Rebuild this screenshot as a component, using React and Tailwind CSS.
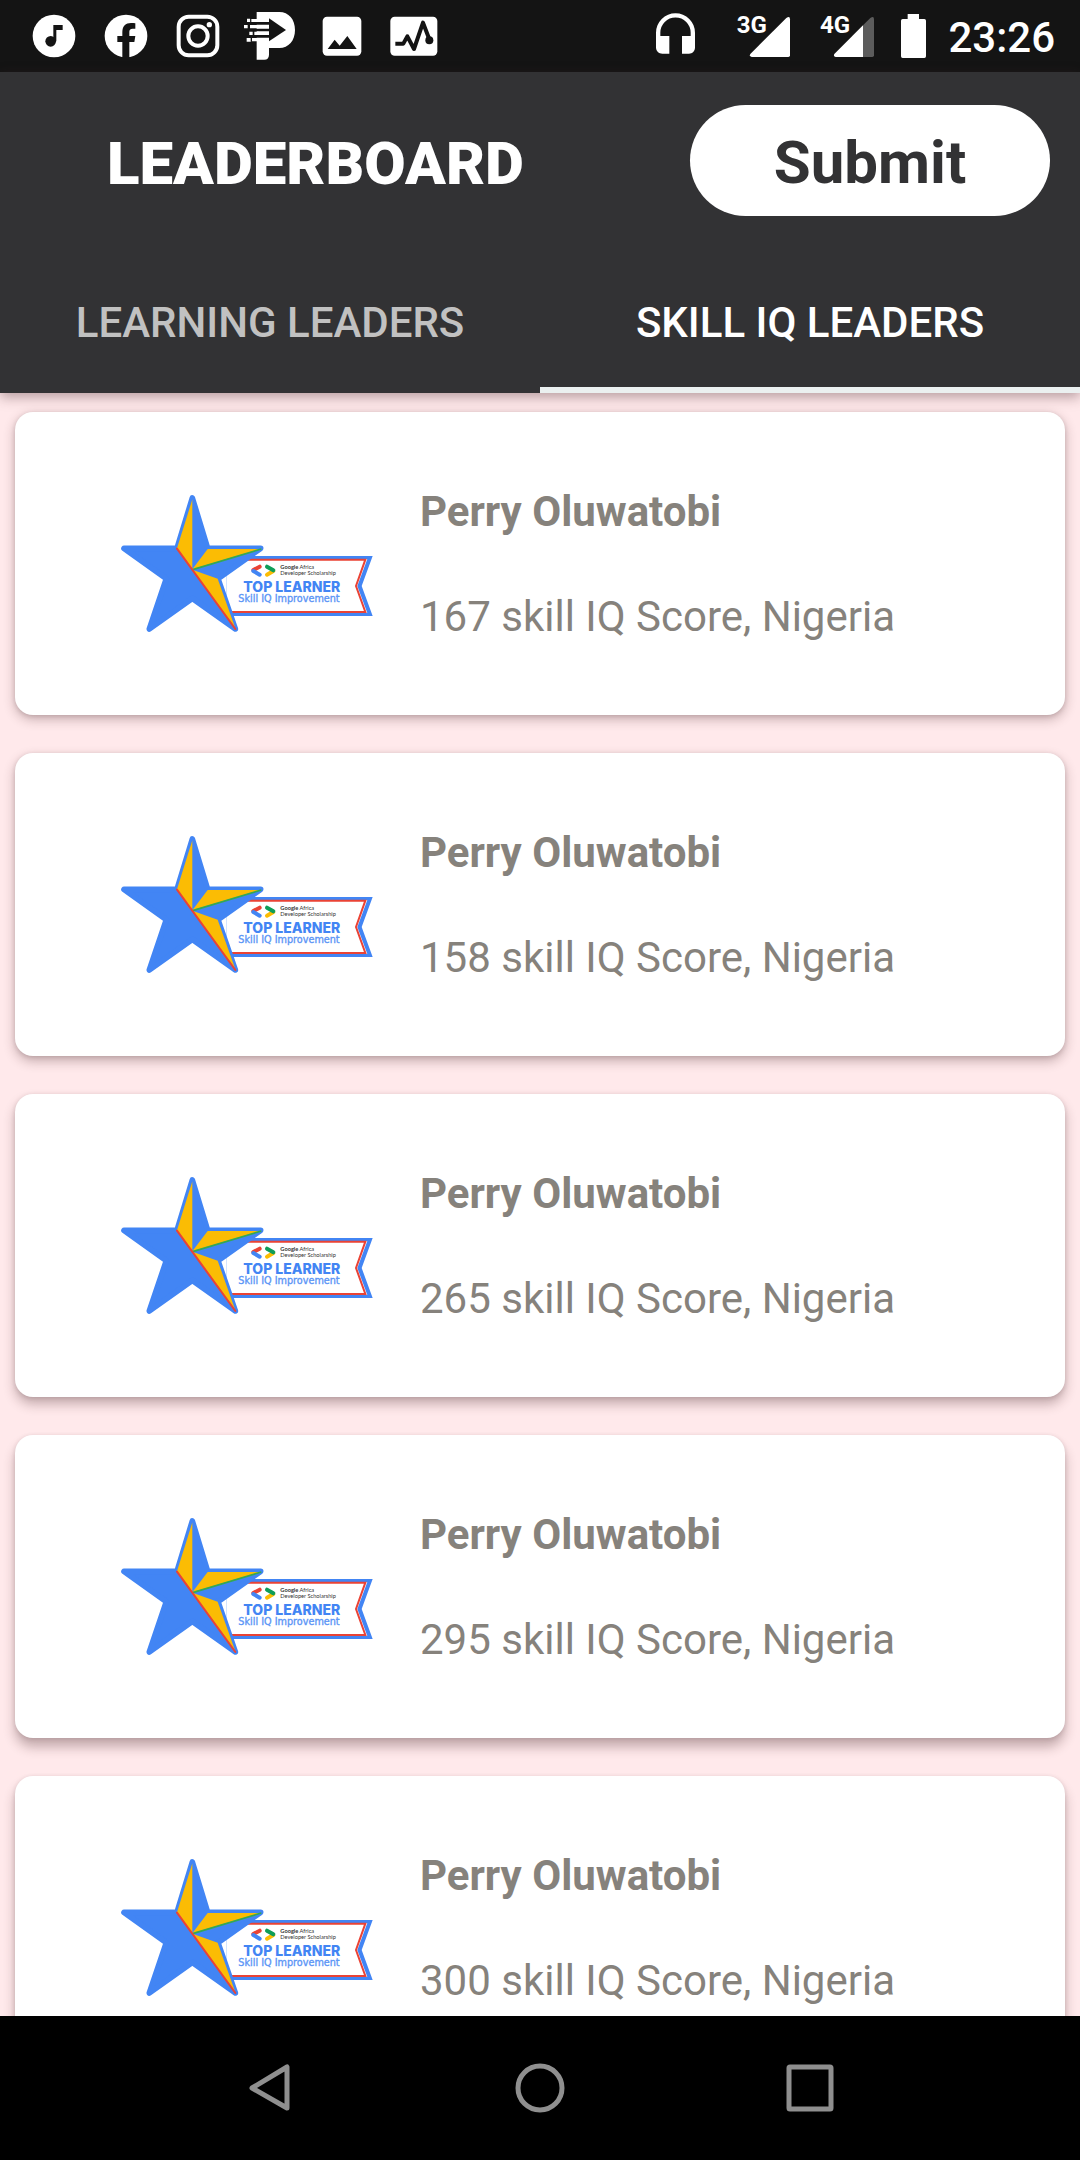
const leaders = [
  { name: "Perry Oluwatobi", score: 167, country: "Nigeria", shadow: "shadow-[0_4px_12px_rgba(70,40,45,0.32),0_1px_4px_rgba(70,40,45,0.15)]" },
  { name: "Perry Oluwatobi", score: 158, country: "Nigeria", shadow: "shadow-[0_5px_12px_rgba(70,40,45,0.32),0_1px_4px_rgba(70,40,45,0.15)]" },
  { name: "Perry Oluwatobi", score: 265, country: "Nigeria", shadow: "shadow-[0_7px_12px_rgba(70,40,45,0.32),0_1px_4px_rgba(70,40,45,0.15)]" },
  { name: "Perry Oluwatobi", score: 295, country: "Nigeria", shadow: "shadow-[0_9px_12px_rgba(70,40,45,0.32),0_1px_4px_rgba(70,40,45,0.15)]" },
  { name: "Perry Oluwatobi", score: 300, country: "Nigeria", shadow: "shadow-[0_9px_12px_rgba(70,40,45,0.32),0_1px_4px_rgba(70,40,45,0.15)]" },
];

function StatusIcon({ viewBox, label, className = "w-[72px]", children }) {
  return (
    <svg viewBox={viewBox} role="img" aria-label={label} className={`h-[72px] shrink-0 ${className}`}>
      {children}
    </svg>
  );
}

function StatusBar() {
  return (
    <div className="flex h-[72px] shrink-0 items-center justify-between bg-[#141414] pl-[18px] pr-[25px] text-white">
      <div className="flex">
        <StatusIcon viewBox="54 0 216 216" label="Music">
          <circle cx="162" cy="108" r="64" fill="#fff" />
          <circle cx="152" cy="124" r="16" fill="#141414" />
          <path d="M160 75h28v15h-19v34h-9z" fill="#141414" />
        </StatusIcon>
        <StatusIcon viewBox="270 0 216 216" label="Facebook">
          <circle cx="378" cy="108" r="64" fill="#fff" />
          <path d="M367 174v-48h-15v-18h15v-12c0-18 10-27 26-27 5 0 9 0 13 1v16h-8c-8 0-10 5-10 10v12h18l-3 18h-15v48z" fill="#141414" />
        </StatusIcon>
        <StatusIcon viewBox="486 0 216 216" label="Instagram">
          <rect x="536" y="50" width="116" height="116" rx="30" fill="none" stroke="#fff" strokeWidth="12" />
          <circle cx="594" cy="108" r="29" fill="none" stroke="#fff" strokeWidth="12" />
          <circle cx="628" cy="74" r="8" fill="#fff" />
        </StatusIcon>
        <StatusIcon viewBox="702 0 216 216" label="Delivery">
          <path d="M770 36h68c28 0 47 22 47 54s-19 54-47 54h-31v20c0 9-5 15-14 15h-23z" fill="#fff" />
          <path d="M807 55l51 35-51 34z" fill="#141414" />
          <path d="M764 66h44v8h-44zM764 86h44v8h-44zM764 105h44v8h-44z" fill="#141414" />
          <path d="M752 57h19v9h-19zM750 75h26v10h-26zM763 95h14v10h-14zM753 114h18v10h-18zM732 75h11v10h-11zM741 56h9v10h-9zM748 95h10v10h-10zM740 114h13v11h-13z" fill="#fff" />
          <path d="M751 55h3v12h-3zM752 113h4v12h-4z" fill="#141414" />
        </StatusIcon>
        <StatusIcon viewBox="918 0 216 216" label="Picture">
          <rect x="968" y="50" width="116" height="117" rx="13" fill="#fff" />
          <path d="M983 147l21-28 15 18 23-29 28 39z" fill="#141414" />
        </StatusIcon>
        <StatusIcon viewBox="1134 0 216 216" label="Activity">
          <rect x="1171" y="50" width="141" height="117" rx="13" fill="#fff" />
          <path d="M1186 131h24l12-22 20 38 27-79 19 50" fill="none" stroke="#141414" strokeWidth="12" strokeLinejoin="round" />
          <circle cx="1288" cy="121" r="12" fill="#141414" />
        </StatusIcon>
      </div>
      <div className="flex items-center">
        <StatusIcon viewBox="96 0 144 216" label="Headphones" className="w-[48px]">
          <path d="M108 98a58 58 0 0 1 117 0v44c0 12-8 19-18 19h-21v-53h26v-10a45 45 0 0 0-91 0v10h27v53h-21c-10 0-19-7-19-19z" fill="#fff" />
        </StatusIcon>
        <StatusIcon viewBox="282 0 240 216" label="3G signal" className="ml-[14px] w-[80px]">
          <text x="350" y="100" fontSize="72" fontWeight="700" fill="#fff">3G</text>
          <path d="M391 162L499 54q11-7 11 4v108q0 5-5 5H395q-8-2-4-9z" fill="#fff" />
        </StatusIcon>
        <StatusIcon viewBox="534 0 240 216" label="4G signal" className="ml-1 w-[80px]">
          <text x="600" y="100" fontSize="72" fontWeight="700" fill="#fff">4G</text>
          <path d="M729 76l22-22q11-7 11 4v108q0 5-5 5h-28z" fill="#5c5c5c" />
          <path d="M643 162l86-86v95h-82q-8-2-4-9z" fill="#fff" />
        </StatusIcon>
        <StatusIcon viewBox="834 0 96 216" label="Battery full" className="ml-5 w-[32px]">
          <path d="M863 42h34v15h16q5 0 5 5v107q0 5-5 5h-65q-5 0-5-5V62q0-5 5-5h15z" fill="#fff" />
        </StatusIcon>
        <time className="ml-[18px] pt-0.5 text-[42px] font-medium leading-[49px]">23:26</time>
      </div>
    </div>
  );
}

function Badge() {
  return (
    <svg viewBox="0 0 870 510" role="img" aria-label="Top Learner, Skill IQ Improvement" className="h-[170px] w-[290px] shrink-0">
      <path d="M380 228h438l-33 90 33 90H380z" fill="#4285f4" />
      <path d="M380 237h422l-30 81 30 81H380z" fill="#fff" />
      <path d="M380 239h416l-28 79 28 78H380" fill="none" stroke="#ea4335" strokeWidth="6" />
      <path d="M277 54l46 151h159L354 296l52 151-129-92-129 92 51-151L72 205h159z" fill="#4285f4" stroke="#4285f4" strokeWidth="17" strokeLinejoin="round" />
      <path d="M277 58v210l-46-63z" fill="#fbbc04" />
      <path d="M323 207h158l-204 61z" fill="#fbbc04" />
      <path d="M277 269l76 27 52 146z" fill="#fbbc04" />
      <path d="M278 269l206-62" stroke="#34a853" strokeWidth="5" />
      <path d="M231 206l175 241" stroke="#ea4335" strokeWidth="6" strokeLinecap="round" />
      <g fill="none" strokeWidth="12" strokeLinecap="round">
        <path d="M460 270l19-10" stroke="#ea4335" />
        <path d="M460 273l19 11" stroke="#4285f4" />
        <path d="M520 273l-19 11" stroke="#fbbc04" />
        <path d="M501 260l19 11" stroke="#0f9d58" />
      </g>
      <g fontFamily="Lato, sans-serif" fontSize="17" fill="#333">
        <text x="541" y="266"><tspan fontWeight="700">Google</tspan> Africa</text>
        <text x="541" y="286">Developer Scholarship</text>
      </g>
      <text x="430" y="336" fontFamily="Inter, sans-serif" fontSize="42" fontWeight="800" fill="#4285f4">TOP LEARNER</text>
      <text x="415" y="366" fontFamily="DejaVu Sans, sans-serif" fontSize="29" fill="#5b95f6" stroke="#5b95f6" strokeWidth="1">Skill IQ Improvement</text>
    </svg>
  );
}

function LeaderCard({ leader }) {
  return (
    <li className={`flex h-[303px] shrink-0 items-center gap-[30px] rounded-[18px] bg-white pl-[85px] pr-6 ${leader.shadow}`}>
      <div className="pt-0.5">
        <Badge />
      </div>
      <div className="flex flex-col gap-14 text-[42px] leading-[49px] text-[#86827c]">
        <h2 className="font-bold">{leader.name}</h2>
        <p>{leader.score} skill IQ Score, {leader.country}</p>
      </div>
    </li>
  );
}

function Header() {
  return (
    <header className="relative z-10 shrink-0 bg-[#323234] shadow-[0_4px_12px_rgba(70,40,45,0.4)]">
      <div className="flex items-start justify-between pl-[107px] pr-[30px] pt-[33px]">
        <h1 className="pt-6 text-[60px] font-black leading-[70px] text-white">LEADERBOARD</h1>
        <button type="button" className="h-[111px] w-[360px] rounded-full bg-white pt-1 text-[60px] font-bold text-[#323234]">
          Submit
        </button>
      </div>
      <div role="tablist" className="mt-[33px] grid grid-cols-2 text-[42px] font-medium leading-[49px]">
        <button type="button" role="tab" aria-selected="false" className="h-36 border-b-6 border-transparent pt-2 text-[#c1c1c1]">
          LEARNING LEADERS
        </button>
        <button type="button" role="tab" aria-selected="true" className="h-36 border-b-6 border-[#ebf0f0] pt-2 text-white">
          SKILL IQ LEADERS
        </button>
      </div>
    </header>
  );
}

function NavigationBar() {
  return (
    <nav className="flex h-36 shrink-0 items-center justify-center gap-[174px] bg-black">
      <button type="button" aria-label="Back">
        <svg viewBox="0 0 96 96" className="size-24" fill="none" stroke="#8f8f8f" strokeWidth="5" strokeLinejoin="round">
          <path d="M65 27v41L30 48z" />
        </svg>
      </button>
      <button type="button" aria-label="Home">
        <svg viewBox="0 0 96 96" className="size-24" fill="none" stroke="#8f8f8f" strokeWidth="5">
          <circle cx="48" cy="48" r="22" />
        </svg>
      </button>
      <button type="button" aria-label="Recent apps">
        <svg viewBox="0 0 96 96" className="size-24" fill="none" stroke="#8f8f8f" strokeWidth="5">
          <rect x="27" y="27" width="42" height="42" rx="1" />
        </svg>
      </button>
    </nav>
  );
}

export default function App() {
  return (
    <div className="flex h-screen flex-col overflow-hidden bg-[#ffe9eb] font-[Roboto,sans-serif]">
      <StatusBar />
      <Header />
      <main className="min-h-0 flex-1 overflow-hidden">
        <ul className="flex flex-col gap-[38px] px-[15px] pt-[19px]">
          {leaders.map((leader) => (
            <LeaderCard key={leader.score} leader={leader} />
          ))}
        </ul>
      </main>
      <NavigationBar />
    </div>
  );
}
